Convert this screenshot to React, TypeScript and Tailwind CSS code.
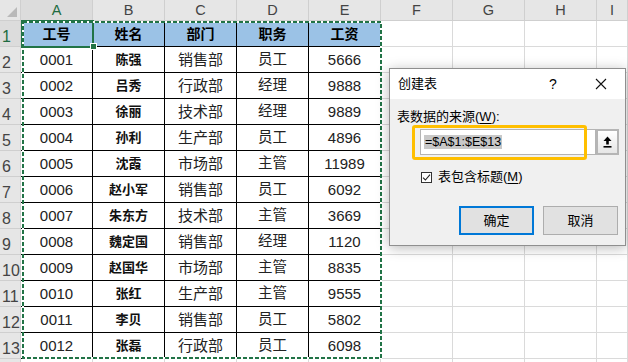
import React from "react";

const COLS = ["A", "B", "C", "D", "E", "F", "G", "H", "I"];

const HEAD = ["工号", "姓名", "部门", "职务", "工资"];
const DATA: string[][] = [
  ["0001", "陈强", "销售部", "员工", "5666"],
  ["0002", "吕秀", "行政部", "经理", "9888"],
  ["0003", "徐丽", "技术部", "经理", "9889"],
  ["0004", "孙利", "生产部", "员工", "4896"],
  ["0005", "沈霞", "市场部", "主管", "11989"],
  ["0006", "赵小军", "销售部", "员工", "6092"],
  ["0007", "朱东方", "技术部", "主管", "3669"],
  ["0008", "魏定国", "销售部", "经理", "1120"],
  ["0009", "赵国华", "市场部", "主管", "8835"],
  ["0010", "张红", "生产部", "主管", "9555"],
  ["0011", "李贝", "销售部", "员工", "5802"],
  ["0012", "张磊", "行政部", "员工", "6098"],
];

const FONT = { fontFamily: '"Liberation Sans","Noto Sans CJK SC",sans-serif' };

const dataCls = [
  "text-[15px] text-[#222]",
  "text-[13px] font-bold text-[#111]",
  "text-[15px] text-[#222]",
  "text-[14.5px] text-[#222]",
  "text-[15px] text-[#222]",
];

function Cell({ r, c }: { r: number; c: number }) {
  const inTable = r <= 13 && c < 5;
  let content: string = "";
  let cls = "";
  if (inTable) {
    if (r === 1) {
      content = HEAD[c];
      cls = "text-[14px] font-bold text-black";
    } else {
      content = DATA[r - 2][c];
      cls = dataCls[c];
    }
  }
  return (
    <div
      className={
        "h-[26px] flex items-center justify-center border-r border-b leading-none " +
        (inTable ? "border-black " : "border-[#dadada] ") +
        (inTable && r === 1 ? "bg-[#9bc2e6] " : "bg-white ") +
        cls
      }
    >
      {content}
    </div>
  );
}

export default function App() {
  const rows = Array.from({ length: 14 }, (_, i) => i + 1);
  return (
    <div className="relative w-[628px] h-[362px] overflow-hidden bg-white" style={FONT}>
      <div className="grid grid-cols-[21px_repeat(8,72px)_31px]">
        {/* corner */}
        <div className="h-[21px] bg-[#e6e6e6] border-r border-b border-[#cfcfcf] relative">
          <svg className="absolute left-0 top-0" width="21" height="21" viewBox="0 0 21 21">
            <polygon points="7,17 17,17 17,7" fill="#b9b9b9" />
          </svg>
        </div>
        {COLS.map((c, i) => (
          <div
            key={c}
            className={
              "h-[21px] flex items-center justify-center border-r border-b border-[#cfcfcf] text-[14.5px] leading-none " +
              (i === 0 ? "bg-[#dcdcdc] text-[#1e6b41]" : "bg-[#e6e6e6] text-[#444]")
            }
          >
            {c}
          </div>
        ))}
        {rows.map((r) => (
          <React.Fragment key={r}>
            <div
              className={
                "h-[26px] flex items-end pl-[2px] pb-[1px] border-r border-b border-[#cfcfcf] text-[16px] leading-none " +
                (r === 1 ? "bg-[#dcdcdc] text-[#1e6b41]" : "bg-[#e6e6e6] text-[#444]")
              }
            >
              {r <= 13 ? r : ""}
            </div>
            {COLS.map((_, c) => (
              <Cell key={c} r={r} c={c} />
            ))}
          </React.Fragment>
        ))}
      </div>

      {/* active cell */}
      <div className="absolute left-[21px] top-[20px] w-[73px] h-[28px] border-2 border-[#217346]" />
      <div className="absolute left-[90px] top-[43px] w-[7px] h-[7px] bg-[#217346] border border-white" />

      {/* marching ants */}
      <svg className="absolute left-0 top-0 pointer-events-none" width="628" height="362">
        <rect x="23" y="22" width="358" height="336" fill="none" stroke="#ffffff" strokeWidth="2" />
        <rect x="23" y="22" width="358" height="336" fill="none" stroke="#217346" strokeWidth="2" strokeDasharray="4 2" />
      </svg>

      {/* dialog */}
      <div
        className="absolute left-[389px] top-[68px] w-[237px] h-[178px] bg-[#f0f0f0] border border-[#8f8f8f] shadow-[0_2px_12px_rgba(0,0,0,0.28)] flex flex-col"
        style={FONT}
      >
        <div className="h-[30px] bg-white flex items-center pl-[8px] text-[13px] text-black">
          <span>创建表</span>
          <span className="ml-auto w-[12px] text-center text-[14px] mr-[36px]">?</span>
          <svg width="12" height="12" viewBox="0 0 12 12" className="mr-[18px]">
            <path d="M1 1 L11 11 M11 1 L1 11" stroke="#111" strokeWidth="1.1" />
          </svg>
        </div>
        <div className="flex flex-col pl-[7px]">
          <div className="mt-[10px] h-[16px] flex items-center text-[13px] text-black">
            表数据的来源(<span className="underline underline-offset-2">W</span>):
          </div>
          <div className="mt-[4px] ml-[23px] flex">
            <div className="w-[176px] h-[26px] bg-white border border-[#b4b4b4] flex items-center pl-[3px]">
              <span className="bg-[#c8c8c8] text-[12.5px] text-black leading-[14px] px-[1px]">=$A$1:$E$13</span>
            </div>
            <div className="w-[23px] h-[26px] border-2 border-[#b5b5b5] bg-[#e9e9e9] flex items-center justify-center">
              <div className="w-full h-full bg-gradient-to-b from-white to-[#e6e6e6] flex items-center justify-center">
                <svg width="9" height="12" viewBox="0 0 9 12">
                  <polygon points="4.5,0.5 8.5,5 0.5,5" fill="#000" />
                  <rect x="3.2" y="4.5" width="2.6" height="4" fill="#000" />
                  <rect x="0.5" y="10" width="8" height="1.6" fill="#000" />
                </svg>
              </div>
            </div>
          </div>
          <div className="mt-[15px] ml-[24px] h-[14px] flex items-center text-[13px] text-black">
            <div className="w-[11px] h-[11px] border border-[#333] bg-white flex items-center justify-center mr-[6px]">
              <svg width="9" height="9" viewBox="0 0 9 9">
                <path d="M1 4.6 L3.4 7 L8 1.6" fill="none" stroke="#222" strokeWidth="1.1" />
              </svg>
            </div>
            <span>
              表包含标题(<span className="underline underline-offset-2">M</span>)
            </span>
          </div>
          <div className="mt-[22px] flex">
            <div className="ml-[62px] w-[75px] h-[29px] border-2 border-[#0078d7] bg-[#e1e1e1] flex items-center justify-center text-[13px] text-black">
              确定
            </div>
            <div className="ml-[9px] w-[75px] h-[29px] border border-[#adadad] bg-[#e1e1e1] flex items-center justify-center text-[13px] text-black">
              取消
            </div>
          </div>
        </div>
        {/* annotation box */}
        <div className="absolute left-[22px] top-[56px] w-[175px] h-[35px] border-[3px] border-[#ffbf00] rounded-[3px]" />
      </div>
    </div>
  );
}
